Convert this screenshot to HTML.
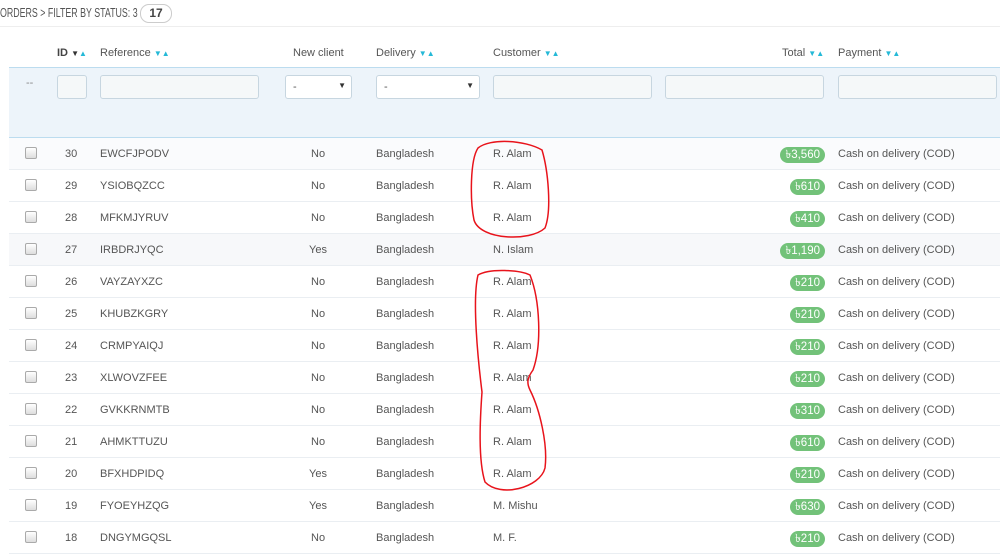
<!DOCTYPE html>
<html><head><meta charset="utf-8"><style>
body{margin:0;width:1000px;height:538px;overflow:hidden;background:#fff;font-family:"Liberation Sans",sans-serif;color:#555;font-size:11px;position:relative}
.a{position:absolute;white-space:nowrap}
.row{position:absolute;left:9px;width:991px;height:32px;border-bottom:1px solid #eaeef2;box-sizing:border-box}
.cb{position:absolute;left:16px;top:9px;width:10px;height:10px;border:1px solid #aaa;border-radius:2px;background:linear-gradient(#fff,#ddd)}
.t{position:absolute;top:10px}
.badge{position:absolute;top:9px;height:16px;line-height:16px;background:#72c279;color:#fff;border-radius:8px;padding:0 5px;font-size:11.5px;right:175px}
.inp{position:absolute;top:75px;height:24px;border:1px solid #c7d6e0;border-radius:3px;background:#f5f8f9;box-sizing:border-box}
.ar{color:#25b9d7;font-size:8px}
</style></head><body>
<div class="a" style="left:0;top:5px;font-size:13px;color:#555;transform:scaleX(0.68);transform-origin:0 0">ORDERS &gt; FILTER BY STATUS: 3</div>
<div class="a" style="left:140px;top:4px;width:30px;height:17px;border:1px solid #ccc;border-radius:9px;text-align:center;line-height:17px;font-weight:bold;font-size:12px;color:#444;background:#fff">17</div>
<div class="a" style="left:0;top:26px;width:1000px;border-top:1px solid #eee"></div>
<div class="a" style="left:57px;top:47px;font-weight:bold;color:#444">ID <span style="color:#333;font-size:8px">▼</span><span class="ar">▲</span></div>
<div class="a" style="left:100px;top:47px">Reference <span class="ar">▼▲</span></div>
<div class="a" style="left:293px;top:47px">New client</div>
<div class="a" style="left:376px;top:47px">Delivery <span class="ar">▼▲</span></div>
<div class="a" style="left:493px;top:47px">Customer <span class="ar">▼▲</span></div>
<div class="a" style="left:782px;top:47px">Total <span class="ar">▼▲</span></div>
<div class="a" style="left:838px;top:47px">Payment <span class="ar">▼▲</span></div>
<div class="a" style="left:9px;top:67px;width:991px;height:71px;background:#edf4fa;border-top:1px solid #bcdcef;border-bottom:1px solid #bcdcef;box-sizing:border-box"></div>
<div class="a" style="left:26px;top:77px;color:#888">--</div>
<div class="inp" style="left:57px;width:30px"></div>
<div class="inp" style="left:100px;width:159px"></div>
<div class="inp" style="left:285px;width:67px;background:#fff"><span class="a" style="left:7px;top:5px">-</span><span class="a" style="right:5px;top:5px;font-size:8px;color:#333">▼</span></div>
<div class="inp" style="left:376px;width:104px;background:#fff"><span class="a" style="left:7px;top:5px">-</span><span class="a" style="right:5px;top:5px;font-size:8px;color:#333">▼</span></div>
<div class="inp" style="left:493px;width:159px"></div>
<div class="inp" style="left:665px;width:159px"></div>
<div class="inp" style="left:838px;width:159px"></div>

<div class="row" style="top:138px;background:#fafbfd"><div class="cb"></div><span class="t" style="left:56px">30</span><span class="t" style="left:91px">EWCFJPODV</span><span class="t" style="left:302px">No</span><span class="t" style="left:367px">Bangladesh</span><span class="t" style="left:484px">R. Alam</span><span class="badge">৳3,560</span><span class="t" style="left:829px">Cash on delivery (COD)</span></div>
<div class="row" style="top:170px"><div class="cb"></div><span class="t" style="left:56px">29</span><span class="t" style="left:91px">YSIOBQZCC</span><span class="t" style="left:302px">No</span><span class="t" style="left:367px">Bangladesh</span><span class="t" style="left:484px">R. Alam</span><span class="badge">৳610</span><span class="t" style="left:829px">Cash on delivery (COD)</span></div>
<div class="row" style="top:202px"><div class="cb"></div><span class="t" style="left:56px">28</span><span class="t" style="left:91px">MFKMJYRUV</span><span class="t" style="left:302px">No</span><span class="t" style="left:367px">Bangladesh</span><span class="t" style="left:484px">R. Alam</span><span class="badge">৳410</span><span class="t" style="left:829px">Cash on delivery (COD)</span></div>
<div class="row" style="top:234px;background:#f7f8fa"><div class="cb"></div><span class="t" style="left:56px">27</span><span class="t" style="left:91px">IRBDRJYQC</span><span class="t" style="left:300px">Yes</span><span class="t" style="left:367px">Bangladesh</span><span class="t" style="left:484px">N. Islam</span><span class="badge">৳1,190</span><span class="t" style="left:829px">Cash on delivery (COD)</span></div>
<div class="row" style="top:266px"><div class="cb"></div><span class="t" style="left:56px">26</span><span class="t" style="left:91px">VAYZAYXZC</span><span class="t" style="left:302px">No</span><span class="t" style="left:367px">Bangladesh</span><span class="t" style="left:484px">R. Alam</span><span class="badge">৳210</span><span class="t" style="left:829px">Cash on delivery (COD)</span></div>
<div class="row" style="top:298px"><div class="cb"></div><span class="t" style="left:56px">25</span><span class="t" style="left:91px">KHUBZKGRY</span><span class="t" style="left:302px">No</span><span class="t" style="left:367px">Bangladesh</span><span class="t" style="left:484px">R. Alam</span><span class="badge">৳210</span><span class="t" style="left:829px">Cash on delivery (COD)</span></div>
<div class="row" style="top:330px"><div class="cb"></div><span class="t" style="left:56px">24</span><span class="t" style="left:91px">CRMPYAIQJ</span><span class="t" style="left:302px">No</span><span class="t" style="left:367px">Bangladesh</span><span class="t" style="left:484px">R. Alam</span><span class="badge">৳210</span><span class="t" style="left:829px">Cash on delivery (COD)</span></div>
<div class="row" style="top:362px"><div class="cb"></div><span class="t" style="left:56px">23</span><span class="t" style="left:91px">XLWOVZFEE</span><span class="t" style="left:302px">No</span><span class="t" style="left:367px">Bangladesh</span><span class="t" style="left:484px">R. Alam</span><span class="badge">৳210</span><span class="t" style="left:829px">Cash on delivery (COD)</span></div>
<div class="row" style="top:394px"><div class="cb"></div><span class="t" style="left:56px">22</span><span class="t" style="left:91px">GVKKRNMTB</span><span class="t" style="left:302px">No</span><span class="t" style="left:367px">Bangladesh</span><span class="t" style="left:484px">R. Alam</span><span class="badge">৳310</span><span class="t" style="left:829px">Cash on delivery (COD)</span></div>
<div class="row" style="top:426px"><div class="cb"></div><span class="t" style="left:56px">21</span><span class="t" style="left:91px">AHMKTTUZU</span><span class="t" style="left:302px">No</span><span class="t" style="left:367px">Bangladesh</span><span class="t" style="left:484px">R. Alam</span><span class="badge">৳610</span><span class="t" style="left:829px">Cash on delivery (COD)</span></div>
<div class="row" style="top:458px"><div class="cb"></div><span class="t" style="left:56px">20</span><span class="t" style="left:91px">BFXHDPIDQ</span><span class="t" style="left:300px">Yes</span><span class="t" style="left:367px">Bangladesh</span><span class="t" style="left:484px">R. Alam</span><span class="badge">৳210</span><span class="t" style="left:829px">Cash on delivery (COD)</span></div>
<div class="row" style="top:490px"><div class="cb"></div><span class="t" style="left:56px">19</span><span class="t" style="left:91px">FYOEYHZQG</span><span class="t" style="left:300px">Yes</span><span class="t" style="left:367px">Bangladesh</span><span class="t" style="left:484px">M. Mishu</span><span class="badge">৳630</span><span class="t" style="left:829px">Cash on delivery (COD)</span></div>
<div class="row" style="top:522px"><div class="cb"></div><span class="t" style="left:56px">18</span><span class="t" style="left:91px">DNGYMGQSL</span><span class="t" style="left:302px">No</span><span class="t" style="left:367px">Bangladesh</span><span class="t" style="left:484px">M. F.</span><span class="badge">৳210</span><span class="t" style="left:829px">Cash on delivery (COD)</span></div>
<svg class="a" style="left:0;top:0" width="1000" height="538">
<path d="M542 150 C525 140 490 138 478 148 C470 160 470 200 474 220 C480 240 530 242 545 228 C552 210 548 170 542 150 Z" fill="none" stroke="#e8131b" stroke-width="1.5"/>
<path d="M478 275 C490 268 520 270 530 275 C540 300 542 345 533 370 C528 377 526 382 530 390 C540 410 548 445 545 468 C540 488 500 498 485 482 C478 460 480 420 482 392 C478 360 472 300 478 275 Z" fill="none" stroke="#e8131b" stroke-width="1.5"/>
</svg>
</body></html>
